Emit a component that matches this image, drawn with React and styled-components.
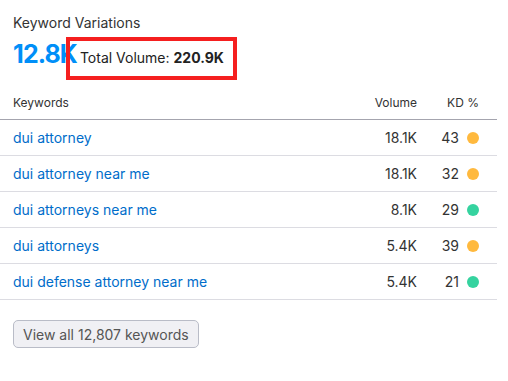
import React from 'react';
import styled, { createGlobalStyle } from 'styled-components';

const GlobalStyle = createGlobalStyle`
  body {
    margin: 0;
    background: #fff;
    font-family: Inter, "Noto Sans", sans-serif;
    color: #333;
  }
`;

const Card = styled.div`
  width: 508px;
  height: 381px;
  box-sizing: border-box;
  padding-top: 13px;
`;

const Title = styled.div`
  padding-left: 13px;
  font-size: 14px;
  line-height: 20px;
  color: #333;
`;

const Summary = styled.div`
  display: flex;
  align-items: baseline;
  margin-top: 5px;
  padding-left: 13px;
  height: 32px;
`;

const BigNumber = styled.span`
  font-size: 25px;
  line-height: 32px;
  font-weight: 700;
  color: #008ff8;
  letter-spacing: -0.9px;
`;

const TotalVolume = styled.span`
  position: relative;
  margin-left: 3px;
  font-size: 14px;
  line-height: 17px;
  color: #222;
  b {
    font-weight: 700;
  }
  &::before {
    content: '';
    position: absolute;
    left: -14px;
    top: -12px;
    width: 171px;
    height: 43px;
    box-sizing: border-box;
    border: 4px solid #f51f1f;
  }
`;

const Table = styled.div`
  width: 497px;
  margin-top: 15px;
`;

const Row = styled.div`
  display: grid;
  grid-template-columns: 1fr auto 62px;
  align-items: center;
  height: ${p => (p.$head ? '34px' : '35px')};
  padding: 0 18px 0 13px;
  border-bottom: 1px solid ${p => (p.$head ? '#a4a4ae' : '#dcdce2')};
  font-size: ${p => (p.$head ? '12px' : '14px')};
  color: #333;
`;

const Keyword = styled.a`
  color: #006dca;
  text-decoration: none;
`;

const Num = styled.span`
  text-align: right;
`;

const Kd = styled.span`
  display: flex;
  justify-content: flex-end;
  align-items: center;
  gap: 8px;
`;

const Dot = styled.span`
  width: 12px;
  height: 12px;
  border-radius: 50%;
  background: ${p => p.$color};
`;

const Button = styled.button`
  margin: 20px 0 0 13px;
  height: 28px;
  padding: 0 9px;
  border: 1px solid #b9bcc7;
  border-radius: 5px;
  background: #f0f0f4;
  color: #555;
  font-family: Inter, "Noto Sans", sans-serif;
  font-size: 14px;
`;

const rows = [
  { kw: 'dui attorney', vol: '18.1K', kd: 43, color: '#ffb93e' },
  { kw: 'dui attorney near me', vol: '18.1K', kd: 32, color: '#ffb93e' },
  { kw: 'dui attorneys near me', vol: '8.1K', kd: 29, color: '#35d39f' },
  { kw: 'dui attorneys', vol: '5.4K', kd: 39, color: '#ffb93e' },
  { kw: 'dui defense attorney near me', vol: '5.4K', kd: 21, color: '#35d39f' },
];

export default function App() {
  return (
    <Card>
      <GlobalStyle />
      <Title>Keyword Variations</Title>
      <Summary>
        <BigNumber>12.8K</BigNumber>
        <TotalVolume>
          Total Volume: <b>220.9K</b>
        </TotalVolume>
      </Summary>
      <Table>
        <Row $head>
          <span>Keywords</span>
          <Num>Volume</Num>
          <Kd>KD %</Kd>
        </Row>
        {rows.map(r => (
          <Row key={r.kw}>
            <span>
              <Keyword href="#">{r.kw}</Keyword>
            </span>
            <Num>{r.vol}</Num>
            <Kd>
              {r.kd}
              <Dot $color={r.color} />
            </Kd>
          </Row>
        ))}
      </Table>
      <Button>View all 12,807 keywords</Button>
    </Card>
  );
}
